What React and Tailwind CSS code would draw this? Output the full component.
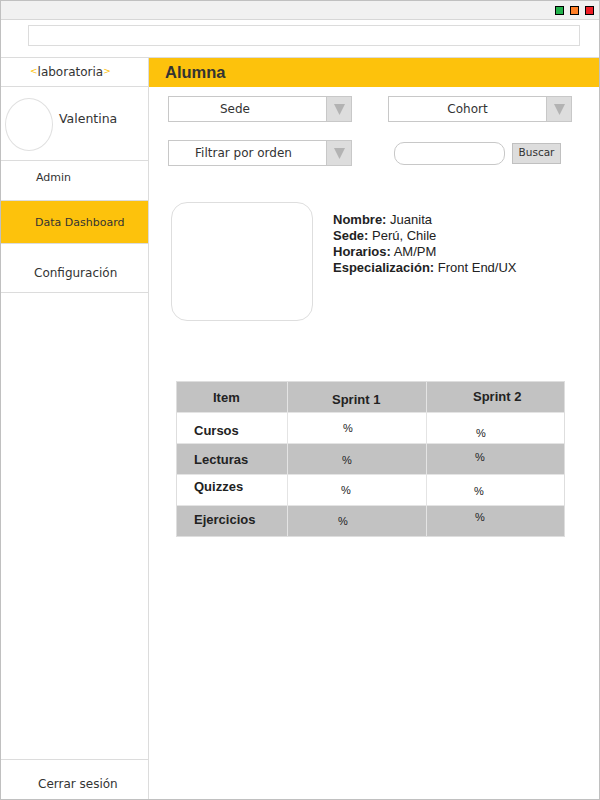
import React from 'react';

const ORANGE = 'bg-[#fdc20c]';

const Select = ({ label, shift = '' }) => (
  <div className="w-[184px] h-[26px] border border-[#c8c8c8] flex bg-white">
    <div className={`flex-1 flex items-center justify-center text-[12px] text-[#333] ${shift}`}>
      {label}
    </div>
    <div className="w-[25px] border-l border-[#c8c8c8] bg-[#dddddd] flex items-center justify-center">
      <svg width="11" height="11" viewBox="0 0 11 11">
        <polygon points="0,0 11,0 5.5,11" fill="#b3b3b3" />
      </svg>
    </div>
  </div>
);

const rows = [
  { label: 'Cursos', lpt: 'pt-[10px]', bg: 'bg-white', s1: 'pl-[55px] pt-[9px]', s2: 'pl-[49px] pt-[14px]' },
  { label: 'Lecturas', lpt: 'pt-[8px]', bg: 'bg-[#c2c2c2]', s1: 'pl-[54px] pt-[10px]', s2: 'pl-[48px] pt-[7px]' },
  { label: 'Quizzes', lpt: 'pt-[4px]', bg: 'bg-white', s1: 'pl-[53px] pt-[9px]', s2: 'pl-[47px] pt-[10px]' },
  { label: 'Ejercicios', lpt: 'pt-[6px]', bg: 'bg-[#c2c2c2]', s1: 'pl-[50px] pt-[9px]', s2: 'pl-[48px] pt-[5px]' },
];

export default function App() {
  return (
    <div
      className="w-[600px] h-[800px] border border-[#c0c0c0] flex flex-col bg-white text-[#333]"
      style={{ fontFamily: '"DejaVu Sans", Verdana, sans-serif' }}
    >
      {/* window title bar */}
      <div className="h-[19px] bg-[#f1f1f1] border-b border-[#d7d7d7] flex items-center justify-end gap-[6px] pr-[5px]">
        <div className="w-[9px] h-[9px] border border-black bg-[#22b14c]" />
        <div className="w-[9px] h-[9px] border border-black bg-[#ff7f27]" />
        <div className="w-[9px] h-[9px] border border-black bg-[#ed1c24]" />
      </div>

      {/* address bar */}
      <div className="h-[37px] pt-[5px] pl-[27px]">
        <div className="w-[552px] h-[21px] border border-[#dcdcdc]" />
      </div>

      <div className="flex-1 flex border-t border-[#dcdcdc]">
        {/* sidebar */}
        <aside className="w-[148px] border-r border-[#dcdcdc] flex flex-col">
          <div className="h-[29px] border-b border-[#dcdcdc] flex items-center pl-[29px] text-[12px]">
            <span className="text-[9px] text-[#fdc20c]">&lt;</span>
            <span className="text-[#333]">laboratoria</span>
            <span className="text-[9px] text-[#fdc20c]">&gt;</span>
          </div>
          <div className="h-[74px] border-b border-[#dcdcdc] flex items-start pl-[4px]">
            <div className="w-[48px] h-[53px] mt-[11px] rounded-[50%] border border-[#e0e0e0]" />
            <span className="ml-[6px] mt-[24px] text-[12.5px] leading-[15px]">Valentina</span>
          </div>
          <div className="h-[40px] border-b border-[#dcdcdc] pl-[35px] pt-[10px] text-[11px] leading-[13px]">
            Admin
          </div>
          <div className={`h-[43px] border-b border-[#dcdcdc] ${ORANGE} pl-[34px] pt-[15px] text-[11px] leading-[13px]`}>
            Data Dashboard
          </div>
          <div className="h-[49px] border-b border-[#dcdcdc] pl-[33px] pt-[22px] text-[12px] leading-[14px]">
            Configuración
          </div>
          <div className="flex-1" />
          <div className="h-[40px] border-t border-[#dcdcdc] pl-[37px] pt-[17px] text-[12px] leading-[14px]">
            Cerrar sesión
          </div>
        </aside>

        {/* main */}
        <main className="flex-1 flex flex-col">
          <div
            className={`h-[29px] ${ORANGE} flex items-center pl-[16px] text-[16.5px] font-bold text-[#333]`}
            style={{ fontFamily: '"Liberation Sans", Arial, sans-serif' }}
          >
            Alumna
          </div>

          <div className="mt-[9px] ml-[19px] flex gap-[36px]">
            <Select label="Sede" shift="pr-[25px]" />
            <Select label="Cohort" />
          </div>

          <div className="mt-[18px] ml-[19px] flex items-center">
            <Select label="Filtrar por orden" shift="pr-[8px]" />
            <div className="ml-[42px] w-[111px] h-[23px] border border-[#c8c8c8] rounded-[10px]" />
            <button className="ml-[7px] w-[49px] h-[21px] border border-[#c0c0c0] bg-[#dddddd] text-[10.5px] text-[#333] flex items-center justify-center">
              Buscar
            </button>
          </div>

          <div
            className="mt-[36px] ml-[22px] flex items-start text-[13px] leading-[16px] text-[#222]"
            style={{ fontFamily: '"Liberation Sans", Arial, sans-serif' }}
          >
            <div className="w-[142px] h-[119px] border border-[#dedede] rounded-[16px]" />
            <div className="ml-[20px] mt-[10px]">
              <div><b>Nombre:</b> Juanita</div>
              <div><b>Sede:</b> Perú, Chile</div>
              <div><b>Horarios:</b> AM/PM</div>
              <div><b>Especialización:</b> Front End/UX</div>
            </div>
          </div>

          <div
            className="mt-[60px] ml-[27px] w-[389px] border border-[#dedede] text-[#222]"
            style={{ fontFamily: '"Liberation Sans", Arial, sans-serif' }}
          >
            <div className="h-[31px] border-b border-[#e4e4e4] bg-[#c2c2c2] flex text-[13px] leading-[15px] font-bold">
              <div className="w-[111px] border-r border-[#e4e4e4] pl-[36px] pt-[8px]">Item</div>
              <div className="w-[139px] border-r border-[#e4e4e4] pl-[44px] pt-[10px]">Sprint 1</div>
              <div className="flex-1 pl-[46px] pt-[7px]">Sprint 2</div>
            </div>
            {rows.map((r, i) => (
              <div
                key={r.label}
                className={`${i < rows.length - 1 ? 'h-[31px] border-b border-[#e4e4e4]' : 'h-[30px]'} ${r.bg} flex`}
              >
                <div className={`w-[111px] border-r border-[#e4e4e4] pl-[17px] ${r.lpt} text-[13px] leading-[15px] font-bold`}>
                  {r.label}
                </div>
                <div className={`w-[139px] border-r border-[#e4e4e4] ${r.s1} text-[11px] leading-[12px]`}>%</div>
                <div className={`flex-1 ${r.s2} text-[11px] leading-[12px]`}>%</div>
              </div>
            ))}
          </div>
        </main>
      </div>
    </div>
  );
}
